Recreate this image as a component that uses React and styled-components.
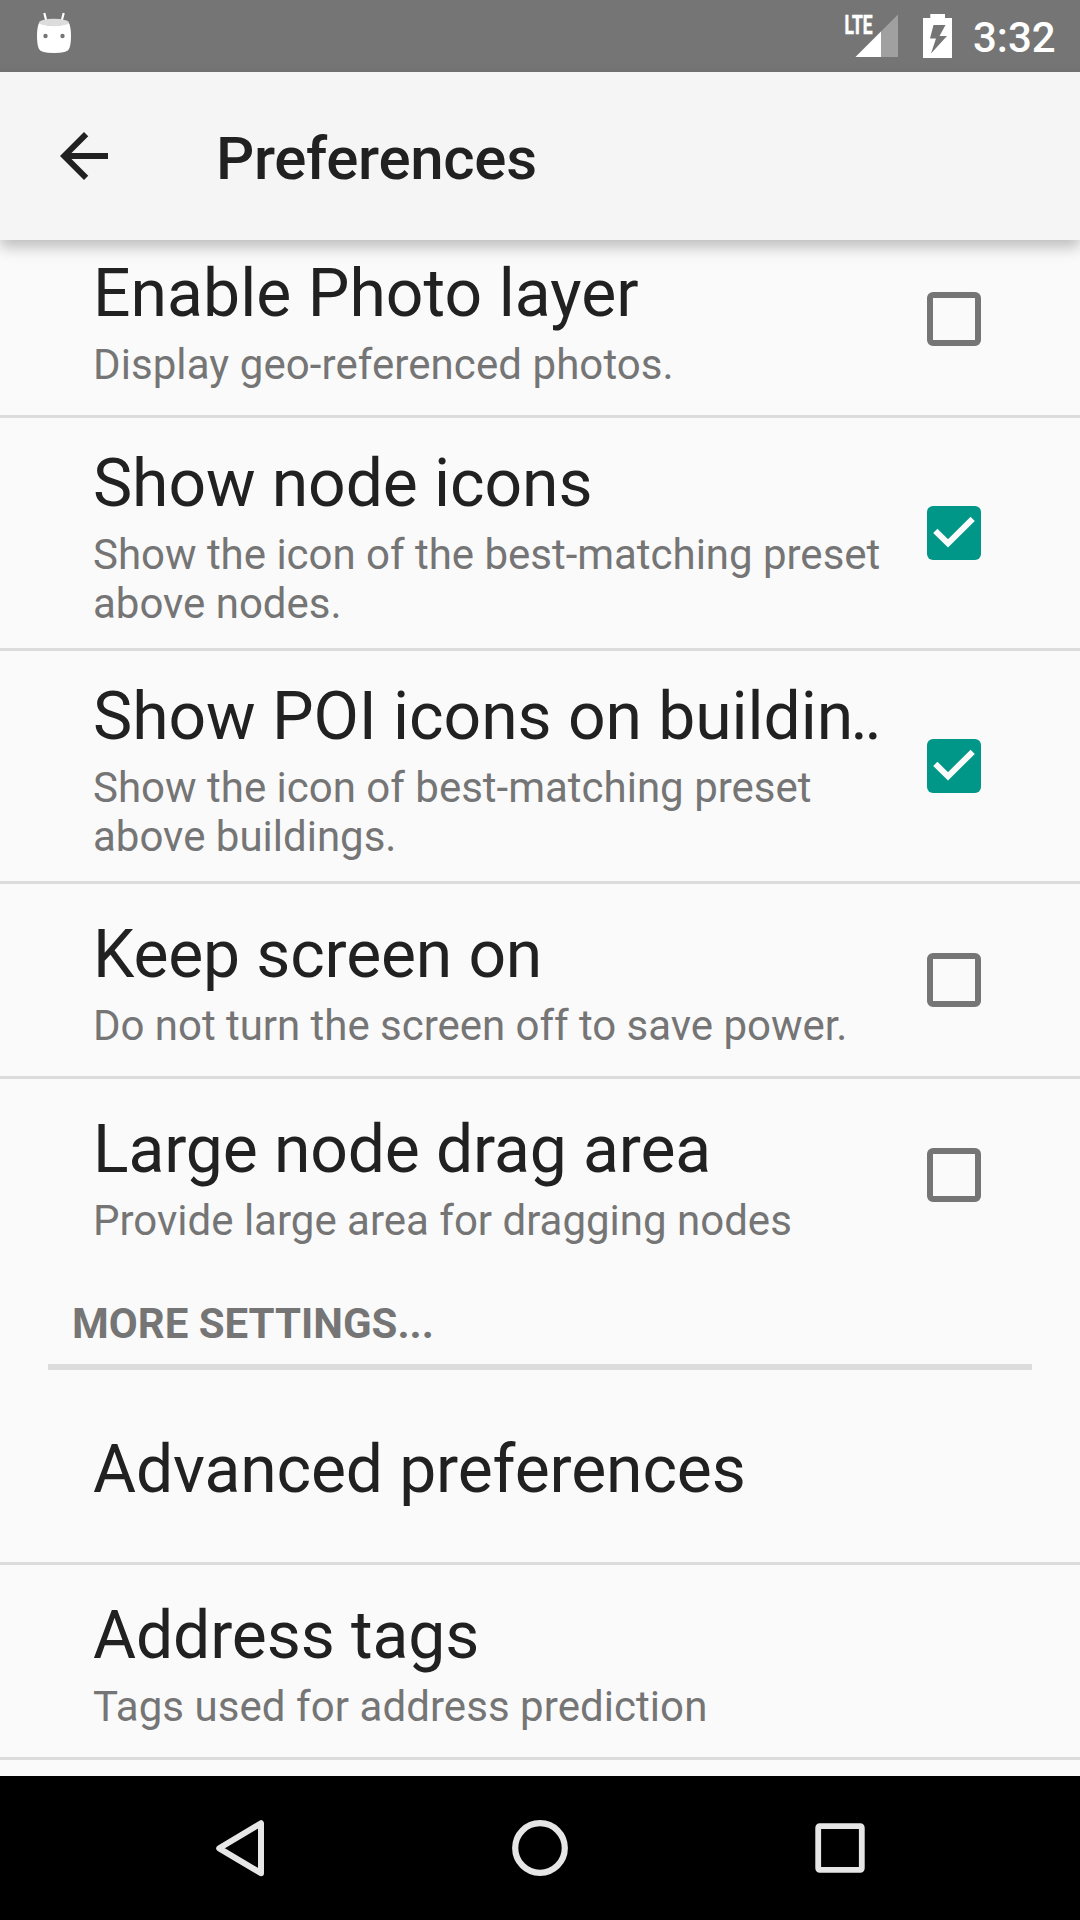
import React from "react";
import styled, { createGlobalStyle } from "styled-components";

const GlobalStyle = createGlobalStyle`
  *, *::before, *::after { box-sizing: border-box; }
  body { margin: 0; background: #fafafa; }
`;

const Screen = styled.div`
  display: flex;
  flex-direction: column;
  width: 1080px;
  height: 1920px;
  overflow: hidden;
  background: #fafafa;
  color: #212121;
  font-family: Roboto, "Noto Sans", sans-serif;
`;

const StatusBar = styled.div`
  display: flex;
  flex: none;
  align-items: flex-start;
  justify-content: space-between;
  height: 72px;
  padding: 0 23px 0 36px;
  background: #757575;
  color: #fff;
`;

const StatusIcons = styled.div`
  display: flex;
  align-items: flex-start;
`;

const BatterySlot = styled.span`
  display: flex;
  margin: 0 20px 0 25px;
`;

const Clock = styled.span`
  width: 84px;
  padding-top: 13px;
  font-size: 42px;
  font-weight: 500;
  line-height: 50px;
  white-space: nowrap;
`;

const Toolbar = styled.header`
  position: relative;
  z-index: 1;
  display: flex;
  flex: none;
  align-items: center;
  gap: 96px;
  height: 168px;
  padding: 0 48px;
  background: #f5f5f5;
  box-shadow: 0 7px 14px rgba(0, 0, 0, 0.25);
`;

const BackButton = styled.button`
  display: flex;
  width: 72px;
  height: 72px;
  padding: 0;
  border: 0;
  background: none;
  color: #212121;
`;

const ToolbarTitle = styled.h1`
  margin: 6px 0 0;
  font-size: 60px;
  font-weight: 500;
  line-height: 70px;
  letter-spacing: -0.32px;
`;

const Viewport = styled.main`
  flex: 1;
  min-height: 0;
  overflow: hidden;
`;

const List = styled.div`
  margin-top: -17px;
`;

const Row = styled.div`
  display: flex;
  align-items: center;
  height: ${(p) => (p.$tall ? 230 : 192) + (p.$divided ? 3 : 0)}px;
  padding: 0 99px 0 93px;
  border-bottom: ${(p) => (p.$divided ? "3px solid #dcdcdc" : "0")};
`;

const RowText = styled.div`
  flex: 1;
  align-self: flex-start;
  min-width: 0;
  padding-top: ${(p) => p.$top}px;
`;

const RowTitle = styled.div`
  font-size: 66px;
  line-height: 78px;
  letter-spacing: ${(p) => p.$tracking || 0}px;
  white-space: nowrap;
`;

const TwoDots = styled.span`
  margin-left: -2.5px;
  letter-spacing: -3.5px;
`;

const Summary = styled.div`
  padding-top: 7px;
  color: #757575;
  font-size: 42px;
  line-height: 49px;
  letter-spacing: ${(p) => p.$tracking || 0}px;
  white-space: pre-line;
`;

const CheckBox = styled.span`
  display: flex;
  flex: none;
  width: 54px;
  height: 54px;
  border: ${(p) => (p.$checked ? "0" : "6px solid #757575")};
  border-radius: 6px;
  background: ${(p) => (p.$checked ? "#009688" : "transparent")};
`;

const Category = styled.h2`
  height: 99px;
  margin: 0 48px;
  padding: 28px 24px 0;
  border-bottom: 6px solid #dcdcdc;
  color: #757575;
  font-size: 42px;
  font-weight: 700;
  line-height: 49px;
`;

const NavBar = styled.nav`
  display: flex;
  flex: none;
  align-items: center;
  justify-content: center;
  gap: 216px;
  height: 144px;
  background: #000;
`;

const NavButton = styled.button`
  display: flex;
  width: 84px;
  height: 84px;
  padding: 0;
  border: 0;
  background: none;
`;

const DISPLAY_SETTINGS = [
  {
    title: "Enable Photo layer",
    titleTracking: 0.06,
    summary: "Display geo-referenced photos.",
    summaryTracking: 0.08,
    checked: false,
  },
  {
    title: "Show node icons",
    titleTracking: -0.08,
    summary: "Show the icon of the best-matching preset\nabove nodes.",
    summaryTracking: -0.02,
    checked: true,
    tall: true,
  },
  {
    title: "Show POI icons on buildin",
    titleTracking: -0.05,
    truncated: true,
    summary: "Show the icon of best-matching preset\nabove buildings.",
    checked: true,
    tall: true,
  },
  {
    title: "Keep screen on",
    titleTracking: -0.15,
    summary: "Do not turn the screen off to save power.",
    summaryTracking: -0.03,
    checked: false,
  },
  {
    title: "Large node drag area",
    titleTracking: -0.12,
    summary: "Provide large area for dragging nodes",
    checked: false,
  },
];

const MORE_SETTINGS = [
  { title: "Advanced preferences", titleTracking: -0.12 },
  {
    title: "Address tags",
    titleTracking: -0.1,
    summary: "Tags used for address prediction",
    summaryTracking: 0.06,
  },
];

function DebugIcon() {
  return (
    <svg width="36" height="56" viewBox="0 0 36 56">
      <path d="M8.300 13l2.300 9M27.700 13l-2.300 9" stroke="#fff" strokeWidth="2.200" />
      <path
        d="M3 23Q18 29 33 23Q35 27 35 36Q35 45 33 49Q31.500 53 18 53Q4.500 53 3 49Q1 45 1 36Q1 27 3 23Z"
        fill="#fff"
      />
      <ellipse cx="18" cy="22.500" rx="15" ry="3.700" fill="#dcdcdc" />
      <circle cx="9.500" cy="36" r="2.200" fill="#757575" />
      <circle cx="26.500" cy="36" r="2.200" fill="#757575" />
    </svg>
  );
}

function SignalIcon() {
  return (
    <svg width="54" height="60" viewBox="844 0 54 60">
      <text
        x="844.500"
        y="33.500"
        fill="#fff"
        stroke="#fff"
        strokeWidth="0.600"
        fontFamily="Roboto, sans-serif"
        fontSize="26"
        fontWeight="700"
        textLength="28"
        lengthAdjust="spacingAndGlyphs"
      >
        LTE
      </text>
      <path d="M898 14.500V57H855.500Z" fill="#a0a0a0" />
      <path d="M881 31.500V57H855.500Z" fill="#fff" />
    </svg>
  );
}

function BatteryIcon() {
  return (
    <svg width="30" height="60" viewBox="0 0 30 60">
      <path
        d="M7.300 14H22V18H29V58H0V18H7.300ZM10.500 25L7 38.500H13L8 53.500L24 36H16.500L22.500 25Z"
        fill="#fff"
        fillRule="evenodd"
      />
    </svg>
  );
}

function textTop(summary, tall) {
  if (!summary) return 61;
  return tall ? 27 : 32;
}

function Preference({ title, titleTracking, truncated, summary, summaryTracking, checked, tall, divided }) {
  return (
    <Row $divided={divided} $tall={tall}>
      <RowText $top={textTop(summary, tall)}>
        <RowTitle $tracking={titleTracking}>
          {title}
          {truncated && <TwoDots>..</TwoDots>}
        </RowTitle>
        {summary && <Summary $tracking={summaryTracking}>{summary}</Summary>}
      </RowText>
      {checked !== undefined && (
        <CheckBox $checked={checked} role="checkbox" aria-checked={checked}>
          {checked && (
            <svg width="54" height="54" viewBox="0 0 54 54">
              <path d="M8.300 24.800L21 37.300L45.700 12.800" fill="none" stroke="#fafafa" strokeWidth="6" />
            </svg>
          )}
        </CheckBox>
      )}
    </Row>
  );
}

export default function App() {
  return (
    <Screen>
      <GlobalStyle />
      <StatusBar>
        <DebugIcon />
        <StatusIcons>
          <SignalIcon />
          <BatterySlot>
            <BatteryIcon />
          </BatterySlot>
          <Clock>3:32</Clock>
        </StatusIcons>
      </StatusBar>
      <Toolbar>
        <BackButton aria-label="Back">
          <svg width="72" height="72" viewBox="0 0 24 24" fill="currentColor">
            <path d="M20 11H7.830l5.590-5.590L12 4l-8 8 8 8 1.410-1.410L7.830 13H20v-2z" />
          </svg>
        </BackButton>
        <ToolbarTitle>Preferences</ToolbarTitle>
      </Toolbar>
      <Viewport>
        <List>
          {DISPLAY_SETTINGS.map((item, i) => (
            <Preference key={item.title} {...item} divided={i < DISPLAY_SETTINGS.length - 1} />
          ))}
          <Category>MORE SETTINGS...</Category>
          {MORE_SETTINGS.map((item) => (
            <Preference key={item.title} {...item} divided />
          ))}
        </List>
      </Viewport>
      <NavBar>
        <NavButton aria-label="Back">
          <svg width="84" height="84" viewBox="0 0 84 84" fill="none">
            <path d="M21.200 42.300L63 17.200V67.200Z" stroke="#e6e6e6" strokeWidth="6" strokeLinejoin="round" />
          </svg>
        </NavButton>
        <NavButton aria-label="Home">
          <svg width="84" height="84" viewBox="0 0 84 84" fill="none">
            <circle cx="42" cy="42" r="24.800" stroke="#e6e6e6" strokeWidth="6.200" />
          </svg>
        </NavButton>
        <NavButton aria-label="Overview">
          <svg width="84" height="84" viewBox="0 0 84 84" fill="none">
            <rect x="20.200" y="20.200" width="43.600" height="43.600" rx="1.500" stroke="#e6e6e6" strokeWidth="5.800" />
          </svg>
        </NavButton>
      </NavBar>
    </Screen>
  );
}
